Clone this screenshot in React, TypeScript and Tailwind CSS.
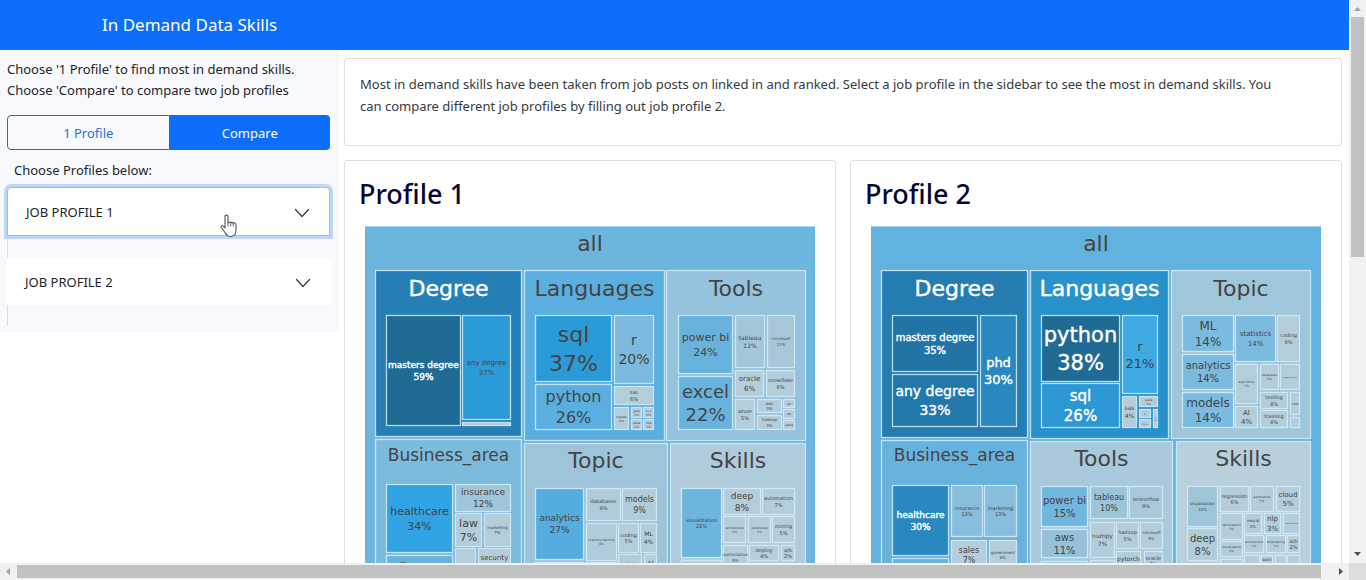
type Cell = [x0: number, y0: number, x1: number, y1: number, fill: string, name?: string, share?: string, size?: number, light?: boolean];

type Group = {
  box: [number, number, number, number];
  fill: string;
  title: string;
  size: number;
  baseline: number;
  light?: boolean;
  cells: Cell[];
};

type Tree = { fill: string; groups: Group[] };

const PALE = '#b4cddb';

const profileOne: Tree = {
  fill: '#6cb5dd',
  groups: [
    {
      box: [10, 44, 157, 211], fill: '#2780b5', title: 'Degree', size: 22, baseline: 70, light: true,
      cells: [
        [21, 89, 96, 200, '#1f6b94', 'masters degree', '59%', 9, true],
        [97, 89, 146, 194, '#2b9bd8', 'any degree', '37%', 7],
        [97, 196, 146, 200, '#b5cad8'],
      ],
    },
    {
      box: [159, 44, 300, 215], fill: '#5aafe0', title: 'Languages', size: 22, baseline: 70,
      cells: [
        [170, 89, 247, 156, '#2b9bd8', 'sql', '37%', 22],
        [170, 158, 247, 204, '#5aafe0', 'python', '26%', 16],
        [249, 89, 289, 158, '#7bbade', 'r', '20%', 14],
        [249, 160, 289, 179, PALE, 'sas', '6%', 5],
        [249, 181, 264, 204, PALE, 'matlab', '4%', 3],
        [266, 181, 277, 192, PALE, 'java', '2%', 3],
        [278, 181, 289, 192, PALE, 'c++', '2%', 3],
        [266, 193, 277, 204, PALE, 'scala', '2%', 3],
        [278, 193, 289, 204, PALE, 'vba', '1%', 3],
      ],
    },
    {
      box: [301, 44, 441, 215], fill: '#95c2dc', title: 'Tools', size: 22, baseline: 70,
      cells: [
        [313, 89, 368, 148, '#68b3dd', 'power bi', '24%', 11],
        [313, 150, 368, 204, '#68b3dd', 'excel', '22%', 18],
        [370, 89, 400, 142, '#a3c7da', 'tableau', '12%', 6],
        [402, 89, 430, 142, '#a8c8d9', 'microsoft', '11%', 4],
        [370, 144, 399, 171, PALE, 'oracle', '6%', 7],
        [401, 144, 430, 171, PALE, 'snowflake', '6%', 5],
        [370, 173, 390, 204, PALE, 'azure', '5%', 5],
        [392, 173, 417, 187, PALE, 'aws', '3%', 4],
        [392, 189, 417, 204, PALE, 'hadoop', '3%', 4],
        [418, 173, 430, 182, PALE, 'git', '', 3],
        [418, 183, 430, 193, PALE, 'etl', '', 3],
        [418, 194, 430, 204, PALE, 'spark', '', 3],
      ],
    },
    {
      box: [10, 213, 157, 420], fill: '#7dbbdd', title: 'Business_area', size: 17, baseline: 235,
      cells: [
        [21, 258, 88, 327, '#2fa3e3', 'healthcare', '34%', 11],
        [21, 329, 88, 366, '#68b3dd', 'finance', '19%', 11],
        [90, 258, 146, 286, '#9fc5da', 'insurance', '12%', 9],
        [90, 287, 117, 321, PALE, 'law', '7%', 11],
        [119, 287, 146, 321, PALE, 'marketing', '7%', 4],
        [90, 322, 111, 350, PALE],
        [113, 322, 146, 350, PALE, 'security', '5%', 7],
      ],
    },
    {
      box: [159, 217, 303, 420], fill: '#9dc4da', title: 'Topic', size: 22, baseline: 242,
      cells: [
        [170, 262, 219, 334, '#55addf', 'analytics', '27%', 9],
        [170, 336, 219, 380, PALE],
        [221, 262, 256, 295, '#b0ccda', 'databases', '9%', 5],
        [257, 262, 292, 295, '#b0ccda', 'models', '9%', 8],
        [221, 297, 252, 335, '#b0cbda', 'machine learning', '9%', 3],
        [221, 336, 252, 380, PALE],
        [253, 297, 274, 327, PALE, 'coding', '5%', 5],
        [275, 297, 292, 327, PALE, 'ML', '4%', 6],
        [253, 328, 277, 354, PALE, 'statistics', '4%', 5],
        [279, 328, 292, 354, PALE, 'AI', '3%', 6],
      ],
    },
    {
      box: [305, 217, 441, 420], fill: '#b0ccdc', title: 'Skills', size: 22, baseline: 242,
      cells: [
        [316, 262, 357, 332, '#6cb5dd', 'visualization', '22%', 5],
        [316, 334, 357, 380, PALE],
        [358, 262, 396, 289, PALE, 'deep', '8%', 9],
        [397, 262, 430, 289, PALE, 'automation', '7%', 5],
        [358, 290, 381, 317, PALE, 'architecture', '5%', 3],
        [383, 290, 406, 317, PALE, 'warehouse', '5%', 3],
        [407, 290, 430, 317, PALE, 'mining', '5%', 5],
        [358, 319, 383, 344, PALE, 'optimization', '5%', 4],
        [384, 319, 414, 335, PALE, 'deploy', '4%', 5],
        [416, 319, 430, 335, PALE, 'a/b', '2%', 5],
        [384, 337, 430, 380, PALE],
      ],
    },
  ],
};

const profileTwo: Tree = {
  fill: '#61b2df',
  groups: [
    {
      box: [10, 44, 157, 212], fill: '#247cb0', title: 'Degree', size: 22, baseline: 70, light: true,
      cells: [
        [21, 89, 107, 146, '#2374a6', 'masters degree', '35%', 10, true],
        [21, 148, 107, 201, '#2378ab', 'any degree', '33%', 14, true],
        [109, 89, 146, 201, '#2888bf', 'phd', '30%', 13, true],
      ],
    },
    {
      box: [159, 44, 298, 213], fill: '#2892cd', title: 'Languages', size: 22, baseline: 70, light: true,
      cells: [
        [170, 89, 249, 156, '#1f6b94', 'python', '38%', 21, true],
        [170, 157, 249, 202, '#2b97d5', 'sql', '26%', 15, true],
        [251, 89, 287, 168, '#3fa9e3', 'r', '21%', 13],
        [251, 170, 266, 202, PALE, 'sas', '4%', 6],
        [268, 170, 287, 181, PALE, 'scala', '3%', 3],
        [268, 183, 280, 192, PALE, 'c', '', 3],
        [268, 193, 280, 202, PALE, 'c++', '', 3],
        [282, 183, 287, 202, PALE, 'js', '1%', 2],
      ],
    },
    {
      box: [300, 44, 440, 213], fill: '#9fc6db', title: 'Topic', size: 22, baseline: 70,
      cells: [
        [311, 89, 363, 126, '#7bbbdf', 'ML', '14%', 12],
        [311, 128, 363, 164, '#7bbbdf', 'analytics', '14%', 10],
        [311, 166, 363, 202, '#7bbbdf', 'models', '14%', 12],
        [364, 89, 405, 136, '#7bbbdf', 'statistics', '14%', 7],
        [406, 89, 429, 136, PALE, 'coding', '8%', 5],
        [364, 138, 387, 178, PALE, 'algorithms', '7%', 3],
        [389, 138, 408, 164, PALE, 'databases', '5%', 3],
        [409, 138, 429, 164, PALE, 'programming', '', 2],
        [364, 180, 387, 202, PALE, 'AI', '4%', 7],
        [389, 166, 417, 183, PALE, 'testing', '4%', 5],
        [389, 184, 417, 202, PALE, 'training', '4%', 5],
        [419, 166, 429, 189, PALE, 'code', '', 3],
        [419, 191, 429, 202, PALE],
      ],
    },
    {
      box: [10, 214, 157, 420], fill: '#68b3de', title: 'Business_area', size: 17, baseline: 235,
      cells: [
        [21, 259, 78, 330, '#2888bf', 'healthcare', '30%', 9, true],
        [21, 332, 78, 380, '#68b3de'],
        [80, 259, 112, 311, '#87bedd', 'insurance', '13%', 5],
        [113, 259, 146, 311, '#87bedd', 'marketing', '13%', 5],
        [80, 314, 116, 344, PALE, 'sales', '7%', 8],
        [118, 314, 146, 344, PALE, 'government', '6%', 4],
      ],
    },
    {
      box: [159, 215, 302, 420], fill: '#a9c9dc', title: 'Tools', size: 22, baseline: 240,
      cells: [
        [170, 260, 217, 301, '#6fb7df', 'power bi', '15%', 10],
        [170, 303, 217, 332, '#95c2da', 'aws', '11%', 10],
        [170, 335, 217, 380, '#a3c7da'],
        [219, 260, 257, 293, '#9dc5da', 'tableau', '10%', 8],
        [258, 260, 292, 293, '#a8c9da', 'tensorflow', '9%', 5],
        [219, 296, 244, 332, PALE, 'numpy', '7%', 6],
        [219, 334, 244, 380, PALE],
        [245, 296, 268, 323, PALE, 'hadoop', '5%', 5],
        [269, 296, 292, 323, PALE, 'microsoft', '5%', 4],
        [245, 325, 270, 348, PALE, 'pytorch', '4%', 6],
        [273, 325, 292, 345, PALE, 'oracle', '3%', 5],
      ],
    },
    {
      box: [305, 215, 440, 420], fill: '#b9d0dc', title: 'Skills', size: 22, baseline: 240,
      cells: [
        [316, 260, 347, 301, '#9dc5da', 'visualization', '10%', 4],
        [316, 302, 347, 335, '#b0cdd9', 'deep', '8%', 10],
        [349, 260, 378, 286, PALE, 'regression', '6%', 5],
        [379, 260, 403, 286, PALE, 'automation', '5%', 3],
        [405, 260, 429, 286, PALE, 'cloud', '5%', 7],
        [349, 287, 372, 314, PALE, 'optimization', '5%', 3],
        [373, 287, 391, 308, PALE, 'neural', '3%', 4],
        [393, 287, 410, 308, PALE, 'nlp', '3%', 7],
        [412, 287, 429, 308, PALE, 'classification', '', 2],
        [373, 309, 393, 327, PALE, 'architecture', '3%', 3],
        [395, 309, 415, 327, PALE, 'engineering', '3%', 3],
        [416, 309, 429, 327, PALE, 'a/b', '2%', 5],
        [349, 315, 372, 331, PALE, 'visualisation', '4%', 3],
        [349, 333, 372, 360, PALE],
        [373, 329, 389, 350, PALE],
        [390, 329, 402, 344, PALE, 'bash', '2%', 4],
        [404, 329, 415, 350, PALE],
        [416, 329, 429, 350, PALE],
      ],
    },
  ],
};

function Box({ box, fill }: { box: number[]; fill: string }) {
  const [x0, y0, x1, y1] = box;
  return (
    <rect
      x={x0 + 0.5}
      y={y0 + 0.5}
      width={x1 - x0 - 1}
      height={y1 - y0 - 1}
      fill={fill}
      stroke="#d5ecf8"
      strokeWidth={1.3}
      strokeOpacity={0.85}
    />
  );
}

function Label({ x, y, size, light, children }: { x: number; y: number; size: number; light?: boolean; children: string }) {
  return (
    <text
      x={x}
      y={y}
      fontSize={size}
      textAnchor="middle"
      fill={light ? '#ffffff' : '#444444'}
      stroke={light ? '#ffffff' : 'none'}
      strokeWidth={0.4}
    >
      {children}
    </text>
  );
}

function Treemap({ tree, label }: { tree: Tree; label: string }) {
  return (
    <svg viewBox="0 0 450 420" role="img" aria-label={label} className="block w-full font-['DejaVu_Sans',Verdana,sans-serif]">
      <rect width={450} height={420} fill={tree.fill} />
      <rect width={450} height={1} fill="#a5d3ee" />
      <Label x={225} y={25} size={22}>all</Label>
      {tree.groups.map((g) => (
        <g key={g.title}>
          <Box box={g.box} fill={g.fill} />
          <Label x={(g.box[0] + g.box[2]) / 2} y={g.baseline} size={g.size} light={g.light}>{g.title}</Label>
          {g.cells.map(([x0, y0, x1, y1, fill, name, share, size = 8, light], i) => {
            const cx = (x0 + x1) / 2;
            const cy = (y0 + y1) / 2;
            return (
              <g key={i}>
                <Box box={[x0, y0, x1, y1]} fill={fill} />
                {name && <Label x={cx} y={share ? cy - size * 0.29 : cy + size * 0.36} size={size} light={light}>{name}</Label>}
                {share && <Label x={cx} y={cy + size * 1.01} size={size} light={light}>{share}</Label>}
              </g>
            );
          })}
        </g>
      ))}
    </svg>
  );
}

function Chevron() {
  return (
    <svg viewBox="0 0 16 16" className="size-4" fill="none" stroke="#343a40" strokeLinecap="round" strokeLinejoin="round" aria-hidden="true">
      <path d="M1.500 4.500 8 11.500 14.500 4.500" strokeWidth={1.2} />
    </svg>
  );
}

function HandCursor() {
  return (
    <svg viewBox="0 0 18 24" className="pointer-events-none absolute top-[27px] left-[213px] h-6 w-[18px]" aria-hidden="true">
      <path
        d="M5 2.500C5 .6 8 .6 8 2.500V9c0-1.400 2.700-1.200 2.700.3 0-1.400 2.600-1.100 2.600.4 0-1.300 2.700-1 2.700.8V16c0 4-2 6.500-5.500 6.500-3 0-4.300-1.500-5.500-4L1.300 13.500c-.8-1.500 1-2.400 2.200-1.200L5 14z"
        fill="#fff"
        stroke="#555"
        strokeWidth={1.1}
        strokeLinejoin="round"
      />
      <path d="M8 9v3.500M10.700 9.500v3M13.300 10v2.500" stroke="#666" fill="none" />
    </svg>
  );
}

function Sidebar() {
  return (
    <aside className="w-[339px] shrink-0 self-start bg-[#f8f9fc] px-[7px] pt-[9px] pb-[6px] text-[13px] text-[#212529]">
      <p className="leading-[21px]">
        Choose '1 Profile' to find most in demand skills.
        <br />
        Choose 'Compare' to compare two job profiles
      </p>
      <div className="mt-[14px] mr-[2px] flex h-[35px]" role="group" aria-label="View">
        <button type="button" className="flex-1 rounded-l border border-[#1a73b8] pt-0.5 text-[#1b74d8]">1 Profile</button>
        <button type="button" className="flex-1 rounded-r bg-[#0d6efd] pt-0.5 text-white">Compare</button>
      </div>
      <p className="mt-[10px] pl-[7px] leading-[21px]">Choose Profiles below:</p>
      <div className="relative mt-[6px] mr-[2px]">
        <button
          type="button"
          aria-expanded="false"
          className="flex h-[49px] w-full items-center justify-between rounded-t border border-[#9dbbe8] bg-white pt-0.5 pr-[19px] pl-[18px] ring-3 ring-[#bfd7f7]"
        >
          JOB PROFILE 1
          <Chevron />
        </button>
        <HandCursor />
      </div>
      <div className="h-[22px] border-l border-[#dcdee2]" />
      <button type="button" aria-expanded="false" className="flex h-[47px] w-full items-center justify-between bg-white pt-0.5 pr-[21px] pl-[18px]">
        JOB PROFILE 2
        <Chevron />
      </button>
      <div className="h-[21px] border-l border-[#dcdee2]" />
    </aside>
  );
}

function ProfileCard({ title, tree }: { title: string; tree: Tree }) {
  return (
    <section className="min-w-0 flex-1 rounded-[3px] border border-[#dfdfdf] px-5">
      <h2 className="-ml-[6px] mt-[13px] mb-3 text-[27px] leading-10 font-medium text-[#060633]">{title}</h2>
      <Treemap tree={tree} label={`Skills for ${title}`} />
    </section>
  );
}

export default function App() {
  return (
    <div className="flex h-screen flex-col overflow-hidden bg-white font-['Noto_Sans','Segoe_UI',sans-serif]">
      <div className="flex min-h-0 flex-1">
        <div className="min-w-0 flex-1 overflow-hidden">
          <header className="flex h-[50px] items-center bg-[#0d6efd] pl-[102px] text-[17px] text-white">
            <h1>In Demand Data Skills</h1>
          </header>
          <div className="flex">
            <Sidebar />
            <main className="min-w-0 flex-1 pt-2 pr-[7px] pl-[5px]">
              <p className="h-[88px] rounded-[3px] border border-[#dfdfdf] pt-[14px] pr-[60px] pl-[15px] text-[13px] leading-[22px] text-[#343a40]">
                Most in demand skills have been taken from job posts on linked in and ranked. Select a job profile in the sidebar to see the most in demand skills. You can compare different job profiles by filling out job profile 2.
              </p>
              <div className="mt-[14px] flex gap-[14px]">
                <ProfileCard title="Profile 1" tree={profileOne} />
                <ProfileCard title="Profile 2" tree={profileTwo} />
              </div>
            </main>
          </div>
        </div>
        <div className="flex w-[17px] shrink-0 flex-col items-center bg-[#f1f1f1]" aria-hidden="true">
          <svg viewBox="0 0 17 17" className="size-[17px] shrink-0"><path d="M5 11h7L8.500 7z" fill="#a3a3a3" /></svg>
          <div className="h-[240px] w-[13px] bg-[#c1c1c1]" />
          <svg viewBox="0 0 17 17" className="mt-auto size-[17px] shrink-0"><path d="M5 6h7l-3.500 4z" fill="#505050" /></svg>
        </div>
      </div>
      <div className="flex h-[17px] shrink-0 items-center bg-[#f1f1f1]" aria-hidden="true">
        <svg viewBox="0 0 17 17" className="size-[17px] shrink-0"><path d="M10 5v7L6 8.500z" fill="#a3a3a3" /></svg>
        <div className="h-[13px] flex-1 bg-[#c1c1c1]" />
        <svg viewBox="0 0 17 17" className="ml-[11px] size-[17px] shrink-0"><path d="M7 5v7l4-3.500z" fill="#505050" /></svg>
        <div className="h-full w-[17px] bg-[#dcdcdc]" />
      </div>
    </div>
  );
}
